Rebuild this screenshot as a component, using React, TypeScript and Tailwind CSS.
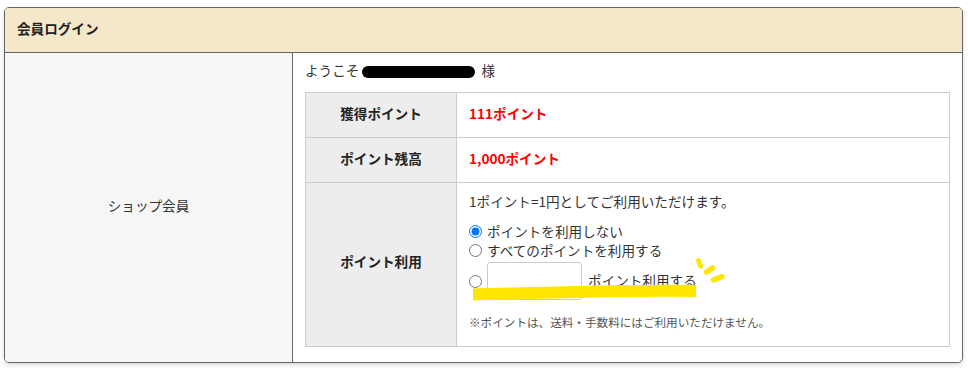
import React from "react";

const font = { fontFamily: '"Noto Sans CJK JP", "Noto Sans", sans-serif' };

function Highlight() {
  // yellow marker scribbles drawn over the screenshot
  return (
    <svg className="pointer-events-none absolute left-0 top-0" width="968" height="371" viewBox="0 0 968 371">
      <path d="M473 294.5 C 540 293, 620 290, 696 291" stroke="#ffe600" strokeWidth="12" fill="none" />
      <path d="M698.5 260.5 L 700.5 266" stroke="#ffe600" strokeWidth="5" strokeLinecap="round" />
      <path d="M706.5 272 L 712.5 268" stroke="#ffe600" strokeWidth="5.5" strokeLinecap="round" />
      <path d="M713.5 280 L 722 276.5" stroke="#ffe600" strokeWidth="5.5" strokeLinecap="round" />
    </svg>
  );
}

function Radio({ checked, children }: { checked?: boolean; children?: React.ReactNode }) {
  return (
    <label className="flex items-center h-[19px]">
      <input type="radio" name="usepoint" defaultChecked={checked} className="m-0 mr-[5px] w-[13px] h-[13px] accent-[#0075ff]" />
      {children}
    </label>
  );
}

export default function App() {
  return (
    <div className="relative w-[968px] h-[371px] bg-white text-[#333] text-[13.6px]" style={font}>
      <div className="absolute left-[4px] top-[7px] w-[959px] h-[356px] border border-[#666] rounded-[5px] overflow-hidden shadow-[0_2px_4px_rgba(0,0,0,0.15)] flex flex-col">
        <div className="h-[45px] shrink-0 bg-[#f5e7c9] border-b border-[#666] flex items-center pl-[12px] pb-[4px] font-bold text-[#222]">
          会員ログイン
        </div>
        <div className="flex flex-1">
          <div className="w-[288px] shrink-0 bg-[#f6f6f6] border-r border-[#666] flex items-center justify-center pb-[5px]">
            ショップ会員
          </div>
          <div className="flex-1 px-[12px] pt-[9px]">
            <div className="flex items-center h-[20px] mb-[10px]">
              <span className="pb-[3px]">ようこそ</span>
              <span className="inline-block w-[113px] h-[12px] rounded-full bg-black ml-[3px] mr-[6px]" />
              <span className="pb-[3px]">様</span>
            </div>
            <table className="w-[645px] border-collapse border border-[#ccc]">
              <tbody>
                <tr className="h-[45px]">
                  <th className="w-[151px] bg-[#ededed] border border-[#ccc] font-bold text-[#222] text-center pb-[4px]">獲得ポイント</th>
                  <td className="border border-[#ccc] pl-[12px] pb-[4px] font-bold text-[#f00]">111ポイント</td>
                </tr>
                <tr className="h-[45px]">
                  <th className="bg-[#ededed] border border-[#ccc] font-bold text-[#222] text-center pb-[4px]">ポイント残高</th>
                  <td className="border border-[#ccc] pl-[12px] pb-[4px] font-bold text-[#f00]">1,000ポイント</td>
                </tr>
                <tr>
                  <th className="bg-[#ededed] border border-[#ccc] font-bold text-[#222] text-center pb-[6px]">ポイント利用</th>
                  <td className="border border-[#ccc] pl-[12px] pt-[8px] pb-[15px]">
                    <div className="h-[20px] leading-[20px]">1ポイント=1円としてご利用いただけます。</div>
                    <div className="mt-[11px]">
                      <Radio checked>ポイントを利用しない</Radio>
                      <Radio>すべてのポイントを利用する</Radio>
                      <label className="flex items-center mt-[2px]">
                        <input type="radio" name="usepoint" className="m-0 mr-[5px] w-[13px] h-[13px]" />
                        <input type="text" className="w-[95px] h-[38px] border border-[#ccc] rounded-[3px] outline-none" />
                        <span className="ml-[6px] pb-[2px]">ポイント利用する</span>
                      </label>
                    </div>
                    <div className="mt-[14px] text-[11.6px] text-[#555] leading-[17px]">※ポイントは、送料・手数料にはご利用いただけません。</div>
                  </td>
                </tr>
              </tbody>
            </table>
          </div>
        </div>
      </div>
      <Highlight />
    </div>
  );
}
